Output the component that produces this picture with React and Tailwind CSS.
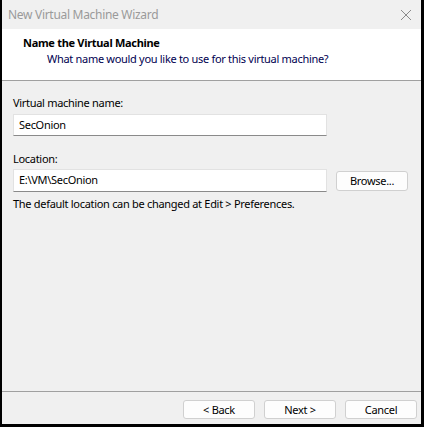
import React from 'react';

function Btn({ children, className = '' }) {
    return (
        <button className={`h-[19px] w-[72px] rounded-[3px] border border-[#d0d0d0] bg-[#fdfdfd] text-[11px] text-black leading-none ${className}`}>
            {children}
        </button>
    );
}

export default function App() {
    return (
        <div className="w-[424px] h-[427px] bg-black pl-[2px] pr-[3px] pb-[3px] font-['Noto_Sans',sans-serif] tracking-[-0.3px]">
            <div className="flex flex-col h-full bg-[#f0f0f0]">
                {/* title bar */}
                <div className="h-[29px] flex items-center justify-between pl-[6px] pr-[9px] bg-[#f0f0f0]">
                    <span className="text-[12px] text-[#9a9a9a]">New Virtual Machine Wizard</span>
                    <svg width="12" height="12" viewBox="0 0 12 12" className="stroke-[#8a8a8a]">
                        <path d="M1 1 L11 11 M11 1 L1 11" strokeWidth="1" />
                    </svg>
                </div>

                {/* header */}
                <div className="h-[52px] bg-white border-b border-[#a0a0a0] pl-[21px] pt-[6px]">
                    <p className="text-[11px] font-bold text-black leading-[16px]">Name the Virtual Machine</p>
                    <p className="text-[11px] text-[#000050] leading-[16px] pl-[24px]">What name would you like to use for this virtual machine?</p>
                </div>

                {/* body */}
                <div className="flex-1 px-[11px] pt-[14px]">
                    <p className="text-[11px] text-black leading-[16px]">Virtual machine name:</p>
                    <div className="mt-[3px] w-[314px] h-[22px] bg-white border border-[#e2e2e2] border-b-[#8a8a8a] flex items-center pl-[5px] text-[11px] text-black">
                        SecOnion
                    </div>

                    <p className="mt-[15px] text-[11px] text-black leading-[16px]">Location:</p>
                    <div className="mt-[2px] flex items-center gap-[9px]">
                        <div className="w-[314px] h-[23px] bg-white border border-[#e2e2e2] border-b-[#8a8a8a] flex items-center pl-[5px] text-[11px] text-black">
                            E:\VM\SecOnion
                        </div>
                        <Btn className="h-[20px]">Browse...</Btn>
                    </div>
                    <p className="mt-[4px] text-[11px] text-black leading-[16px]">The default location can be changed at Edit &gt; Preferences.</p>
                </div>

                {/* footer */}
                <div className="border-t border-[#a0a0a0] h-[33px] flex items-center justify-end gap-[9px] pr-[4px] pt-[2px]">
                    <Btn>&lt; Back</Btn>
                    <Btn>Next &gt;</Btn>
                    <Btn>Cancel</Btn>
                </div>
            </div>
        </div>
    );
}
